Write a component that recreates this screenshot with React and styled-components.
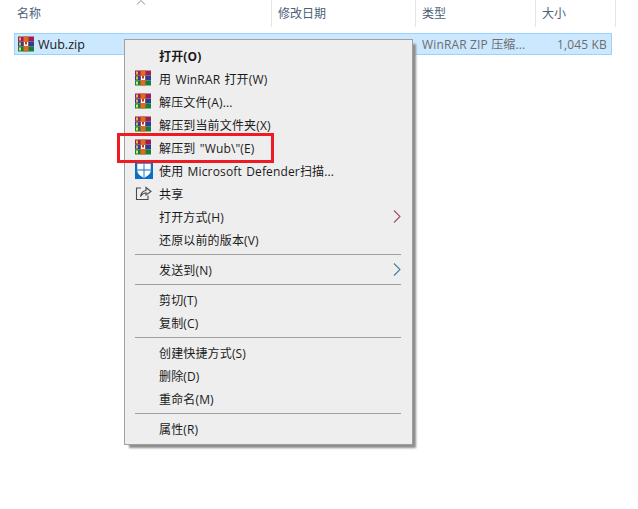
import React from "react";
import styled, { createGlobalStyle } from "styled-components";

const GlobalStyle = createGlobalStyle`
  html, body {
    margin: 0;
    padding: 0;
    background: #fff;
    font-family: "Open Sans", "Noto Sans CJK SC", sans-serif;
    font-size: 12px;
    color: #1a1a1a;
  }
`;

const Page = styled.div`
  position: relative;
  width: 638px;
  height: 509px;
  overflow: hidden;
`;

const Header = styled.div`
  position: relative;
  display: grid;
  grid-template-columns: 258px 144px 120px 80px;
  height: 27px;
  margin-left: 14px;
  width: 602px;
`;

const HeaderCell = styled.div`
  display: flex;
  align-items: center;
  padding: 0 0 1px ${(p) => p.$pad || 6}px;
  border-right: 1px solid #e5e5e5;
  color: #4c607a;
  font-size: 12px;
`;

const SortArrow = styled.svg`
  position: absolute;
  left: 122px;
  top: 0;
`;

const FileRow = styled.div`
  display: grid;
  grid-template-columns: 258px 144px 120px 70px;
  align-items: center;
  box-sizing: border-box;
  height: 22px;
  width: 598px;
  margin: 6px 0 0 14px;
  background: #cce8ff;
  border: 1px solid #99d1ff;
`;

const FileName = styled.div`
  display: flex;
  align-items: center;
  gap: 4px;
  padding-left: 3px;
  font-size: 12.5px;
`;

const FileCell = styled.div`
  grid-column: ${(p) => p.$col};
  color: #6d6d6d;
  padding-left: ${(p) => p.$pad || 0}px;
  text-align: ${(p) => p.$align || "left"};
  letter-spacing: 0.15px;
  white-space: nowrap;
`;

const Menu = styled.div`
  position: absolute;
  left: 124px;
  top: 39px;
  box-sizing: border-box;
  width: 289px;
  padding: 4px 2px 4px;
  background: #eeeeee;
  border: 1px solid #a0a0a0;
  box-shadow: 4px 4px 2px -1px #8c8c8c;
  letter-spacing: 0.15px;
  word-spacing: 1px;
`;

const Item = styled.div`
  position: relative;
  display: flex;
  align-items: center;
  height: 23px;
  padding-left: 32px;
  font-weight: ${(p) => (p.$bold ? 700 : 400)};
  white-space: nowrap;
`;

const ItemIcon = styled.span`
  position: absolute;
  left: 8px;
  top: 2px;
  width: 18px;
  height: 18px;
  display: flex;
  align-items: center;
  justify-content: flex-start;
`;

const SubArrow = styled.svg`
  position: absolute;
  right: 9px;
  top: 5px;
`;

const Separator = styled.div`
  height: 1px;
  margin: 3px 9px 3px 8px;
  background: #a0a0a0;
`;

const Highlight = styled.div`
  position: absolute;
  left: 117px;
  top: 133px;
  width: 151px;
  height: 24px;
  border: 3px solid #ed1c24;
`;

const RarIcon = () => (
  <svg width="16" height="16" viewBox="0 0 16 16" style={{ flex: "none" }}>
    <rect x="0" y="0.5" width="16" height="5" fill="#9c1f52" />
    <rect x="0" y="5.5" width="16" height="5" fill="#2f3c92" />
    <rect x="0" y="10.5" width="16" height="5" fill="#13803a" />
    <rect x="1" y="1.5" width="2" height="3" fill="#e0b93a" />
    <rect x="1" y="6.5" width="2" height="3" fill="#e0b93a" />
    <rect x="1" y="11.5" width="2" height="3" fill="#dfe06a" />
    <rect x="5.5" y="0.5" width="5" height="15" fill="#e06a20" />
    <rect x="6" y="6" width="4" height="4" fill="#fff" />
    <rect x="7" y="6" width="2" height="2.5" fill="#c9302c" />
  </svg>
);

const DefenderIcon = () => (
  <svg width="20" height="20" viewBox="0 0 20 20">
    <rect width="20" height="20" fill="#0a6fc2" />
    <path d="M2.5 3H17.5V10.5C17.5 14.5 13.5 17 10 18.5C6.5 17 2.5 14.5 2.5 10.5Z" fill="#fff" />
    <path d="M9.5 3H10.5V18H9.5ZM2.5 9.5H17.5V10.5H2.5Z" fill="#0a6fc2" />
  </svg>
);

const ShareIcon = () => (
  <svg width="18" height="18" viewBox="0 0 18 18" fill="none" stroke="#4a4a4a" strokeWidth="1.1">
    <path d="M6 4H1.5V15.5H13V11.5" />
    <path d="M5.5 12.5C6 9 8 7 11 6.5V3.5L16 7.5L11 11V8.8C9 9 7 10 5.5 12.5Z" />
  </svg>
);

const Chevron = ({ color }) => (
  <SubArrow width="8" height="13" viewBox="0 0 8 13" fill="none" stroke={color} strokeWidth="1.1">
    <path d="M1 0.5L7 6.5L1 12.5" />
  </SubArrow>
);

const App = () => {
  return (
    <Page>
      <GlobalStyle />
      <Header>
        <HeaderCell $pad={3}>名称</HeaderCell>
        <HeaderCell>修改日期</HeaderCell>
        <HeaderCell>类型</HeaderCell>
        <HeaderCell>大小</HeaderCell>
        <SortArrow width="10" height="5" viewBox="0 0 10 5" fill="none" stroke="#8a8a8a">
          <path d="M1 4.5L5 0.5L9 4.5" />
        </SortArrow>
      </Header>
      <FileRow>
        <FileName>
          <RarIcon />
          Wub.zip
        </FileName>
        <FileCell $col={3} $pad={5}>WinRAR ZIP 压缩...</FileCell>
        <FileCell $col={4} $align="right">1,045 KB</FileCell>
      </FileRow>
      <Menu>
        <Item $bold>打开(O)</Item>
        <Item><ItemIcon><RarIcon /></ItemIcon>用 WinRAR 打开(W)</Item>
        <Item><ItemIcon><RarIcon /></ItemIcon>解压文件(A)...</Item>
        <Item><ItemIcon><RarIcon /></ItemIcon>解压到当前文件夹(X)</Item>
        <Item><ItemIcon><RarIcon /></ItemIcon>解压到 "Wub\"(E)</Item>
        <Item><ItemIcon><DefenderIcon /></ItemIcon>使用 Microsoft Defender扫描...</Item>
        <Item><ItemIcon><ShareIcon /></ItemIcon>共享</Item>
        <Item>打开方式(H)<Chevron color="#9a5560" /></Item>
        <Item>还原以前的版本(V)</Item>
        <Separator />
        <Item>发送到(N)<Chevron color="#4a7c9f" /></Item>
        <Separator />
        <Item>剪切(T)</Item>
        <Item>复制(C)</Item>
        <Separator />
        <Item>创建快捷方式(S)</Item>
        <Item>删除(D)</Item>
        <Item>重命名(M)</Item>
        <Separator />
        <Item>属性(R)</Item>
      </Menu>
      <Highlight />
    </Page>
  );
};

export default App;
